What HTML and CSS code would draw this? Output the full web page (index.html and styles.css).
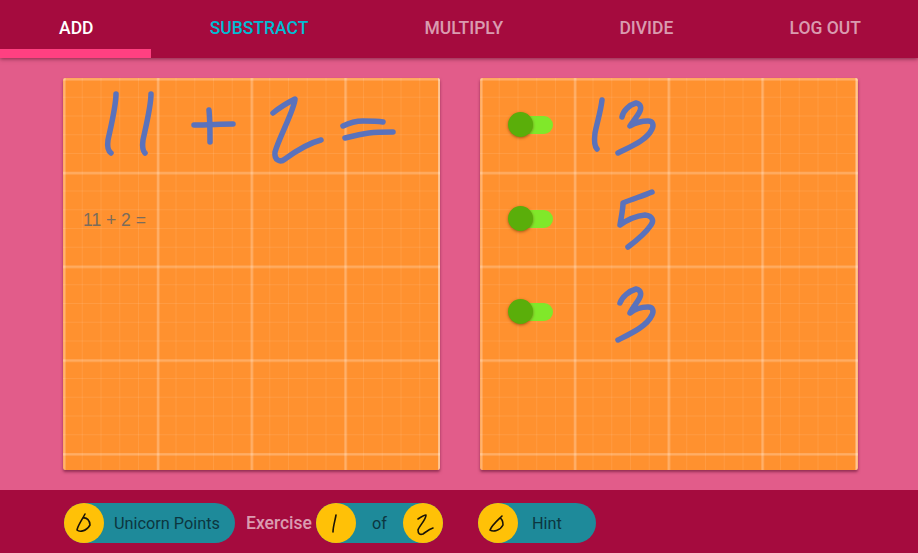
FILE: index.html
```html
<!DOCTYPE html>
<html lang="en">
<head>
<meta charset="utf-8">
<title>Unicorn Math</title>
<link rel="stylesheet" href="styles.css">
</head>
<body>
<nav class="tabs">
  <a class="tab tab-active">ADD<span class="indicator"></span></a>
  <a class="tab tab-accent">SUBSTRACT</a>
  <a class="tab">MULTIPLY</a>
  <a class="tab">DIVIDE</a>
  <a class="tab">LOG OUT</a>
</nav>
<main class="board">
  <section class="card card-left">
    <svg class="ink equation" viewBox="0 0 377 94" width="377" height="94">
      <path d="M53 16C53 28 48 48 45 62C44 69 45 73 48 75"/>
      <path d="M88 16C88 28 83 48 80 62C79 69 80 73 82 75"/>
      <path d="M131 47C145 47 158 46 170 46"/>
      <path d="M146 32C147 42 147 54 147 64"/>
      <path d="M210 35C216 30 226 24 232 21C232 30 216 60 212 74C211 82 217 85 222 81C233 73 246 65 258 62"/>
      <path d="M280 48C286 45 293 43 300 43C307 43 314 43 320 44"/>
      <path d="M282 60C290 58 298 56 306 55C314 54 322 54 330 54"/>
    </svg>
    <p class="question">11 + 2 =</p>
  </section>
  <section class="card card-right">
    <div class="answer">
      <span class="toggle"><span class="knob"></span></span>
      <svg class="ink" viewBox="0 0 100 94" width="100" height="94">
        <path d="M33 22C32 32 28 45 26 55C25 63 26 69 28 71"/>
        <path d="M53 39C54 33 60 27 67 25C72 26 73 30 70 35C67 40 63 45 61 48C66 45 73 43 79 43C84 43 85 47 83 51C78 62 63 68 49 75"/>
      </svg>
    </div>
    <div class="answer">
      <span class="toggle"><span class="knob"></span></span>
      <svg class="ink" viewBox="0 0 100 94" width="100" height="94">
        <path d="M83 20C74 24 63 27 54 31C54 38 52 46 51 53C58 48 67 44 76 43C84 44 85 49 82 53C76 62 67 69 59 75"/>
      </svg>
    </div>
    <div class="answer">
      <span class="toggle"><span class="knob"></span></span>
      <svg class="ink" viewBox="0 0 100 94" width="100" height="94">
        <path d="M51 38C53 32 60 26 67 24C72 25 73 29 70 34C67 39 63 44 61 48C66 44 73 42 79 42C84 42 85 46 83 50C78 61 63 68 49 75"/>
      </svg>
    </div>
  </section>
</main>
<footer class="bar">
  <div class="pill pill-points">
    <svg class="digit" viewBox="0 0 40 40" width="40" height="40"><path d="M21 11C18 17 14 22 13 27C15 29 22 29 26 22C26 18 23 14 19 15"/></svg>
    <span class="pill-label">Unicorn Points</span>
  </div>
  <span class="exercise">Exercise</span>
  <div class="pill pill-exercise">
    <svg class="digit" viewBox="0 0 40 40" width="40" height="40"><path d="M20 12C19 18 17 24 17 29"/></svg>
    <span class="pill-of">of</span>
    <svg class="digit" viewBox="0 0 40 40" width="40" height="40"><path d="M15 16C18 14 21 12 23 12C23 17 16 23 15 27C15 31 17 32 20 31C23 29 26 26 30 25"/></svg>
  </div>
  <div class="pill pill-hint">
    <svg class="digit" viewBox="0 0 40 40" width="40" height="40"><path d="M24 13C20 17 14 22 12 27C15 29 22 28 25 22C25 19 24 16 22 15"/></svg>
    <span class="pill-label pill-label-hint">Hint</span>
  </div>
</footer>
</body>
</html>
```
FILE: styles.css
```css
* { box-sizing: border-box; }
html, body { height: 100%; }
body {
  margin: 0;
  background: #e25c8a;
  font-family: Roboto, "Liberation Sans", sans-serif;
  display: flex;
  flex-direction: column;
  overflow: hidden;
}
.tabs {
  display: flex;
  height: 58px;
  flex: none;
  background: #a50b3e;
  box-shadow: 0 1px 4px rgba(60, 0, 20, .55);
  position: relative;
  z-index: 1;
}
.tab {
  flex: 1 1 auto;
  position: relative;
  text-align: center;
  font-size: 17.5px;
  font-weight: 500;
  line-height: 56px;
  text-indent: 2px;
  color: rgba(255, 255, 255, .6);
}
.tab-active { color: #fff; }
.tab-accent { color: #00bcd4; }
.indicator {
  position: absolute;
  left: 0;
  right: 0;
  bottom: 0;
  height: 9px;
  background: #ff4081;
}
.board {
  flex: 1;
  display: flex;
  justify-content: center;
  gap: 40px;
  padding: 20px 60px;
}
.card {
  height: 392px;
  border-radius: 2px;
  background-color: #ff912f;
  background-image:
    linear-gradient(rgba(255, 255, 255, .14) 1px, rgba(255, 255, 255, .26) 1px, rgba(255, 255, 255, .26) 2px, rgba(255, 255, 255, .14) 2px, rgba(255, 255, 255, .14) 3px, transparent 3px),
    linear-gradient(90deg, rgba(255, 255, 255, .16) 1px, rgba(255, 255, 255, .3) 1px, rgba(255, 255, 255, .3) 2px, rgba(255, 255, 255, .16) 2px, rgba(255, 255, 255, .16) 3px, transparent 3px),
    linear-gradient(rgba(255, 255, 255, .09) 1px, transparent 1px),
    linear-gradient(90deg, rgba(255, 255, 255, .09) 1px, transparent 1px);
  background-size: 93.75px 93.75px, 93.75px 93.75px, 18.75px 18.75px, 18.75px 18.75px;
  background-position: 0 0;
  box-shadow: 0 2px 3px rgba(70, 0, 30, .5);
  border-right: 2px solid rgba(255, 255, 255, .25);
}
.card-left { width: 377px; margin-left: 3px; }
.card-right { width: 378px; display: flex; flex-direction: column; padding-left: 28px; }
.ink { display: block; flex: none; }
.ink path {
  fill: none;
  stroke: #5a72bc;
  stroke-width: 5.5;
  stroke-linecap: round;
  stroke-linejoin: round;
}
.question {
  margin: 0;
  padding: 38px 0 0 20px;
  font-family: "Liberation Sans", Arial, sans-serif;
  font-size: 17.5px;
  line-height: 20px;
  color: #7a6c5c;
}
.answer {
  display: flex;
  align-items: center;
  height: 93.75px;
}
.toggle {
  width: 34px;
  height: 18px;
  margin: 0 0 0 11px;
  position: relative;
  flex: none;
  border-radius: 9px;
  background: #80e82a;
}
.knob {
  position: absolute;
  left: -11px;
  top: -4px;
  width: 25px;
  height: 25px;
  border-radius: 50%;
  background: #5aae0a;
  box-shadow: 0 1px 3px rgba(90, 40, 0, .55);
}
.answer .ink { margin-left: 16px; }
.bar {
  height: 63px;
  flex: none;
  background: #a50b3e;
  display: flex;
  align-items: center;
  padding: 3px 0 0 64px;
}
.pill {
  display: flex;
  align-items: center;
  height: 40px;
  border-radius: 20px;
  background: #1e8a9a;
  color: #0c3640;
  font-size: 16.3px;
}
.pill-points { width: 171px; }
.pill-exercise { width: 127px; justify-content: space-between; }
.pill-hint { width: 118px; margin-left: 35px; }
.pill-label { margin-left: 10px; }
.pill-label-hint { margin-left: 14px; }
.exercise {
  margin: 0 4px 0 11px;
  color: rgba(255, 255, 255, .6);
  font-size: 17.5px;
  font-weight: 500;
}
.digit {
  display: block;
  flex: none;
  border-radius: 50%;
  background: #ffc107;
}
.digit path {
  fill: none;
  stroke: #1a1408;
  stroke-width: 1.6;
  stroke-linecap: round;
  stroke-linejoin: round;
}
```
